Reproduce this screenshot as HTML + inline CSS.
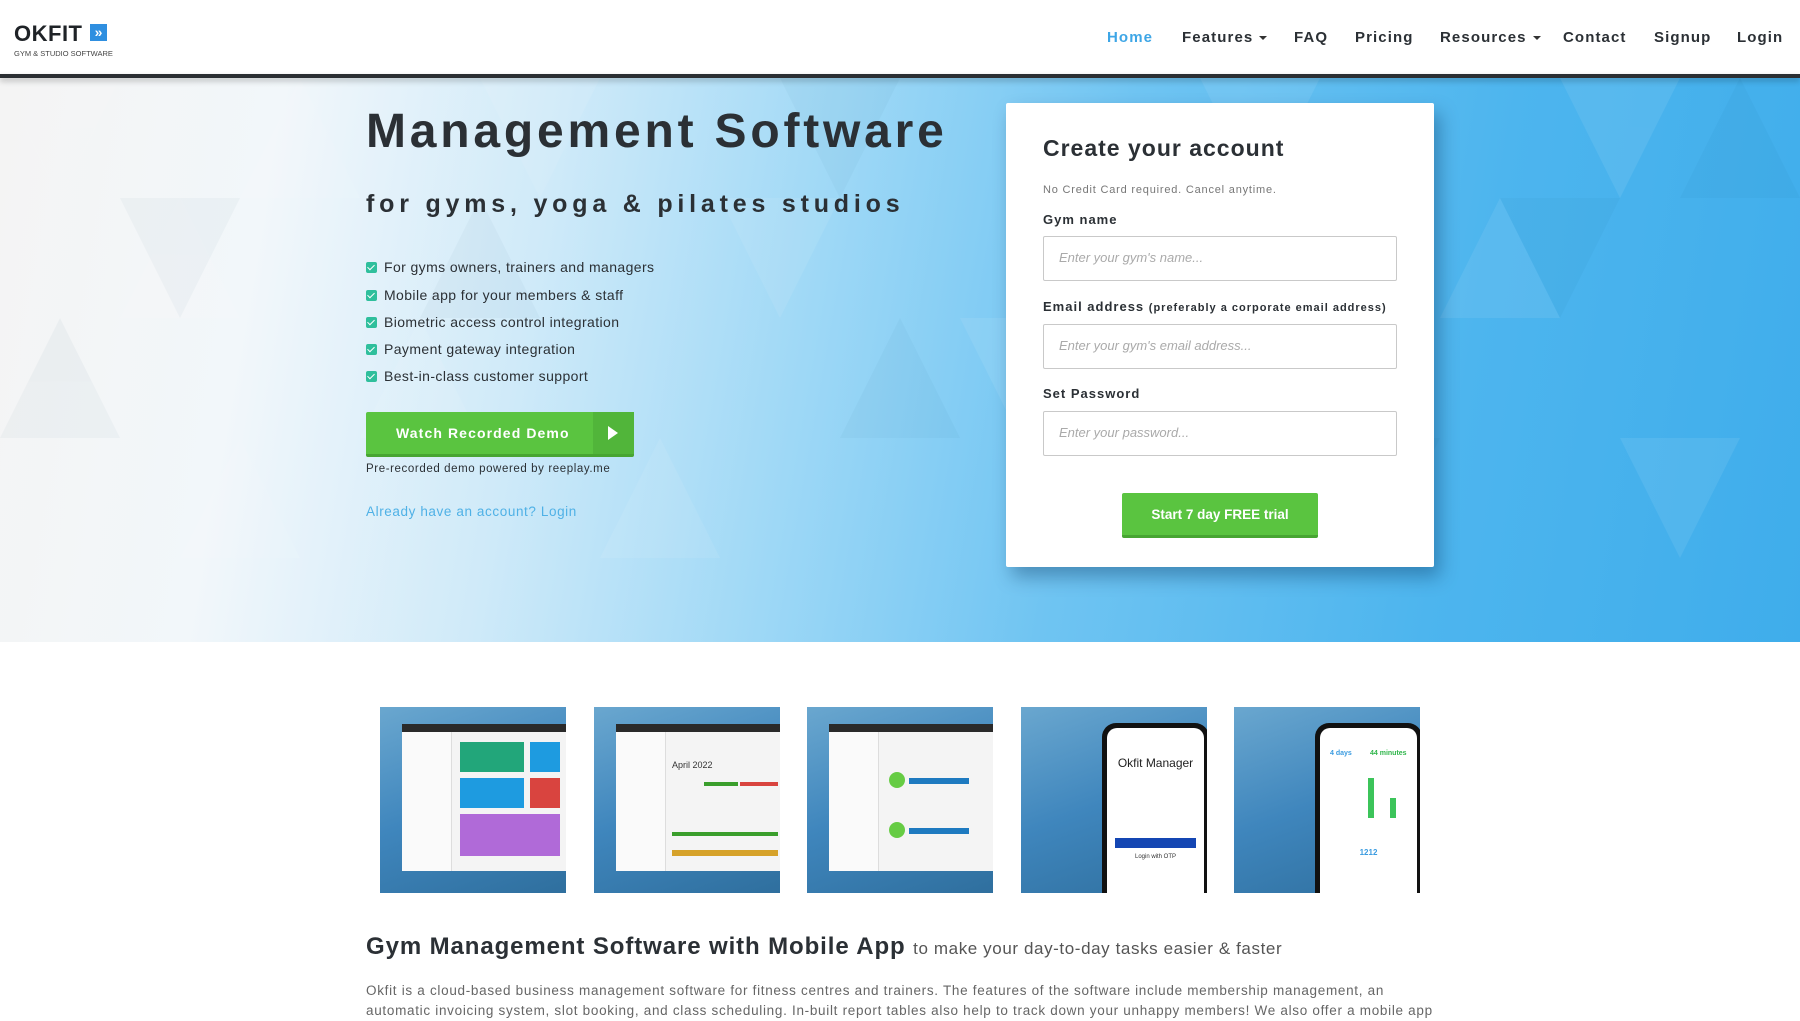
<!DOCTYPE html>
<html><head><meta charset="utf-8">
<style>
*{margin:0;padding:0;box-sizing:border-box}
body{width:1800px;height:1012px;overflow:hidden;font-family:"Liberation Sans",Arial,sans-serif;background:#fff;position:relative;color:#2b3035}
.hdr{position:absolute;left:0;top:0;width:1800px;height:74px;background:#fff}
.bar{position:absolute;left:0;top:74px;width:1800px;height:4px;background:#2b2f33;box-shadow:0 3px 6px rgba(0,0,0,.25);z-index:3}
.logo{position:absolute;left:14px;top:23px}
.logo .t{font-size:22px;font-weight:bold;letter-spacing:.5px;color:#1f2327;line-height:22px}
.logo .s{font-size:7.5px;color:#444;margin-top:4px;white-space:nowrap}
.logo .ic{position:absolute;left:76px;top:1px;width:17px;height:17px;background:#2f8fe0;color:#fff;font-size:14px;line-height:17px;text-align:center;font-weight:bold}
.nav{position:absolute;top:29px;font-size:15px;font-weight:bold;letter-spacing:1.1px;color:#2b3035}
.nav span{position:absolute;white-space:nowrap}
.caret{display:inline-block;width:0;height:0;border-left:4px solid transparent;border-right:4px solid transparent;border-top:4px solid #333;vertical-align:middle;margin-left:6px}
.hero{position:absolute;left:0;top:78px;width:1800px;height:564px;overflow:hidden;background:linear-gradient(100deg,#f4f4f4 0%,#f2f7fa 15%,#cfeaf9 30%,#9ed8f6 45%,#6fc4f2 60%,#4db5ee 80%,#3fadeb 100%)}
h1{position:absolute;left:366px;top:104px;font-size:48px;font-weight:bold;letter-spacing:3.8px;color:#2b3035;white-space:nowrap}
h2{position:absolute;left:366px;top:190px;font-size:25px;font-weight:bold;letter-spacing:4.8px;color:#2b3035;white-space:nowrap}
.li{position:absolute;left:366px;font-size:14px;letter-spacing:.4px;color:#2b3035;white-space:nowrap}
.li i{display:inline-block;width:11px;height:11px;background:#2fbf9c;border-radius:2px;margin-right:7px;vertical-align:-1px;position:relative}
.li i:after{content:"";position:absolute;left:3px;top:1px;width:3px;height:6px;border:solid #fff;border-width:0 1.6px 1.6px 0;transform:rotate(45deg)}
.btn{position:absolute;left:366px;top:412px;width:268px;height:45px;background:#5ac440;border-radius:2px;border-bottom:3px solid #47a532;color:#fff;font-weight:bold;font-size:14px;letter-spacing:1.1px}
.btn .lab{position:absolute;left:30px;top:13px}
.btn .pl{position:absolute;right:0;top:0;width:41px;height:42px;background:#51b53a}
.btn .pl:after{content:"";position:absolute;left:15px;top:14px;border-left:10px solid #fff;border-top:7px solid transparent;border-bottom:7px solid transparent}
.card{position:absolute;left:1006px;top:103px;width:428px;height:464px;background:#fff;border-radius:2px;box-shadow:6px 10px 18px rgba(0,40,80,.35)}
.card h3{position:absolute;left:37px;top:32px;font-size:23px;font-weight:bold;letter-spacing:1px;color:#2b3035}
.card .nc{position:absolute;left:37px;top:81px;font-size:11px;color:#777;letter-spacing:.8px}
.card .lb{position:absolute;left:37px;font-size:13px;font-weight:bold;letter-spacing:1px;color:#2b3035;white-space:nowrap}
.card .lb small{font-size:11px}
.card .in{position:absolute;left:37px;width:354px;height:45px;border:1px solid #c9c9c9;border-radius:2px;font-style:italic;color:#aaa;font-size:13px;padding:13px 15px}
.card .go{position:absolute;left:116px;top:390px;width:196px;height:45px;background:#5ac440;border-bottom:3px solid #47a532;border-radius:2px;color:#fff;font-weight:bold;font-size:13.5px;text-align:center;line-height:43px}
.th{position:absolute;top:707px;width:186px;height:186px;overflow:hidden;background:linear-gradient(160deg,#6aa7cf,#3f86bd 50%,#2f6f9e)}
.win{position:absolute;left:22px;top:17px;right:0;bottom:22px;background:#f4f4f4;border-top:8px solid #2a2a2a}
.side{position:absolute;left:0;top:0;bottom:0;width:50px;background:#fafafa;border-right:1px solid #ddd}
.phone{position:absolute;left:81px;top:16px;width:107px;height:190px;background:#111;border-radius:14px;padding:5px}
.phone div.sc{background:#fff;width:100%;height:100%;border-radius:10px;position:relative}
.sec h4{position:absolute;left:366px;top:933px;font-size:24px;font-weight:bold;letter-spacing:.9px;color:#2b3035;white-space:nowrap}
.sec h4 span{font-weight:normal;font-size:17px;color:#555;letter-spacing:.6px}
.sec p{position:absolute;left:366px;top:981px;width:1070px;font-size:13.5px;line-height:20px;color:#666;letter-spacing:.7px}
</style></head><body>
<div class="hdr">
 <div class="logo"><div class="t">OKFIT</div><div class="ic">»</div><div class="s">GYM &amp; STUDIO SOFTWARE</div></div>
 <div class="nav">
  <span style="left:1107px;color:#3ea6e6">Home</span>
  <span style="left:1182px">Features<i class="caret"></i></span>
  <span style="left:1294px">FAQ</span>
  <span style="left:1355px">Pricing</span>
  <span style="left:1440px">Resources<i class="caret"></i></span>
  <span style="left:1563px">Contact</span>
  <span style="left:1654px">Signup</span>
  <span style="left:1737px">Login</span>
 </div>
</div>
<div class="bar"></div>
<div class="hero">
 <svg width="1800" height="564" style="position:absolute;left:0;top:0">
  <g fill="#fff" opacity=".08">
   <polygon points="0,0 120,0 60,120"/><polygon points="240,120 360,120 300,0"/><polygon points="120,240 240,240 180,120"/>
   <polygon points="480,0 600,0 540,120"/><polygon points="360,360 480,360 420,240"/><polygon points="720,120 840,120 780,240"/>
   <polygon points="960,240 1080,240 1020,360"/><polygon points="1200,0 1320,0 1260,120"/><polygon points="1440,240 1560,240 1500,120"/>
   <polygon points="1620,360 1740,360 1680,480"/><polygon points="600,480 720,480 660,360"/><polygon points="1080,480 1200,480 1140,360"/>
   <polygon points="180,480 300,480 240,360"/><polygon points="1560,0 1680,0 1620,120"/>
  </g>
  <g fill="#00325a" opacity=".03">
   <polygon points="120,120 240,120 180,240"/><polygon points="420,240 540,240 480,120"/><polygon points="840,360 960,360 900,240"/>
   <polygon points="1320,360 1440,360 1380,480"/><polygon points="1500,120 1620,120 1560,240"/><polygon points="1680,120 1800,120 1740,0"/>
   <polygon points="780,0 900,0 840,120"/><polygon points="0,360 120,360 60,240"/><polygon points="1200,240 1320,240 1260,120"/>
  </g>
 </svg>
</div>
<h1>Management Software</h1>
<h2>for gyms, yoga &amp; pilates studios</h2>
<div class="li" style="top:259px"><i></i>For gyms owners, trainers and managers</div>
<div class="li" style="top:287px"><i></i>Mobile app for your members &amp; staff</div>
<div class="li" style="top:314px"><i></i>Biometric access control integration</div>
<div class="li" style="top:341px"><i></i>Payment gateway integration</div>
<div class="li" style="top:368px"><i></i>Best-in-class customer support</div>
<div class="btn"><span class="lab">Watch Recorded Demo</span><span class="pl"></span></div>
<div style="position:absolute;left:366px;top:463px;font-size:11.5px;letter-spacing:.6px;color:#2b3035">Pre-recorded demo powered by reeplay.me</div>
<div style="position:absolute;left:366px;top:504px;font-size:13.5px;letter-spacing:.6px;color:#4fb1e6">Already have an account? Login</div>
<div class="card">
 <h3>Create your account</h3>
 <div class="nc">No Credit Card required. Cancel anytime.</div>
 <div class="lb" style="top:109px">Gym name</div>
 <div class="in" style="top:133px">Enter your gym's name...</div>
 <div class="lb" style="top:196px">Email address <small>(preferably a corporate email address)</small></div>
 <div class="in" style="top:221px">Enter your gym's email address...</div>
 <div class="lb" style="top:283px">Set Password</div>
 <div class="in" style="top:308px">Enter your password...</div>
 <div class="go">Start 7 day FREE trial</div>
</div>
<div class="th" style="left:380px"><div class="win"><div class="side"></div>
 <div style="position:absolute;left:58px;top:10px;width:64px;height:30px;background:#22a67a"></div><div style="position:absolute;left:128px;top:10px;width:30px;height:30px;background:#1e9be0"></div>
 <div style="position:absolute;left:58px;top:46px;width:64px;height:30px;background:#1e9be0"></div><div style="position:absolute;left:128px;top:46px;width:30px;height:30px;background:#d9443f"></div>
 <div style="position:absolute;left:58px;top:82px;width:100px;height:42px;background:#b06ad8"></div></div></div>
<div class="th" style="left:594px"><div class="win"><div class="side"></div>
 <div style="position:absolute;left:56px;top:28px;font-size:9px;color:#333">April 2022</div>
 <div style="position:absolute;left:88px;top:50px;width:34px;height:4px;background:#3a9e2c"></div><div style="position:absolute;left:124px;top:50px;width:38px;height:4px;background:#d9443f"></div>
 <div style="position:absolute;left:56px;top:100px;width:106px;height:4px;background:#3a9e2c"></div><div style="position:absolute;left:56px;top:118px;width:106px;height:6px;background:#d6a22a"></div></div></div>
<div class="th" style="left:807px"><div class="win"><div class="side"></div>
 <div style="position:absolute;left:60px;top:40px;width:16px;height:16px;border-radius:50%;background:#6c4"></div><div style="position:absolute;left:80px;top:46px;width:60px;height:6px;background:#1e7ac0"></div>
 <div style="position:absolute;left:60px;top:90px;width:16px;height:16px;border-radius:50%;background:#6c4"></div><div style="position:absolute;left:80px;top:96px;width:60px;height:6px;background:#1e7ac0"></div></div></div>
<div class="th" style="left:1021px"><div class="phone"><div class="sc">
 <div style="position:absolute;left:0;right:0;top:28px;text-align:center;font-size:12px;color:#222">Okfit Manager</div>
 <div style="position:absolute;left:8px;right:8px;top:110px;height:10px;background:#1446b3"></div>
 <div style="position:absolute;left:0;right:0;top:126px;text-align:center;font-size:6px;color:#333">Login with OTP</div></div></div></div>
<div class="th" style="left:1234px"><div class="phone"><div class="sc">
 <div style="position:absolute;left:10px;top:22px;font-size:7px;color:#3a9be0;font-weight:bold">4 days</div><div style="position:absolute;left:50px;top:22px;font-size:7px;color:#2fb54a;font-weight:bold">44 minutes</div>
 <div style="position:absolute;left:48px;top:50px;width:6px;height:40px;background:#3cc45a"></div><div style="position:absolute;left:70px;top:70px;width:6px;height:20px;background:#3cc45a"></div>
 <div style="position:absolute;left:0;right:0;top:120px;text-align:center;font-size:8px;color:#3a9be0;font-weight:bold">1212</div></div></div></div>
<div class="sec">
 <h4>Gym Management Software with Mobile App <span>to make your day-to-day tasks easier &amp; faster</span></h4>
 <p>Okfit is a cloud-based business management software for fitness centres and trainers. The features of the software include membership management, an automatic invoicing system, slot booking, and class scheduling. In-built report tables also help to track down your unhappy members! We also offer a mobile app</p>
</div>
</body></html>
